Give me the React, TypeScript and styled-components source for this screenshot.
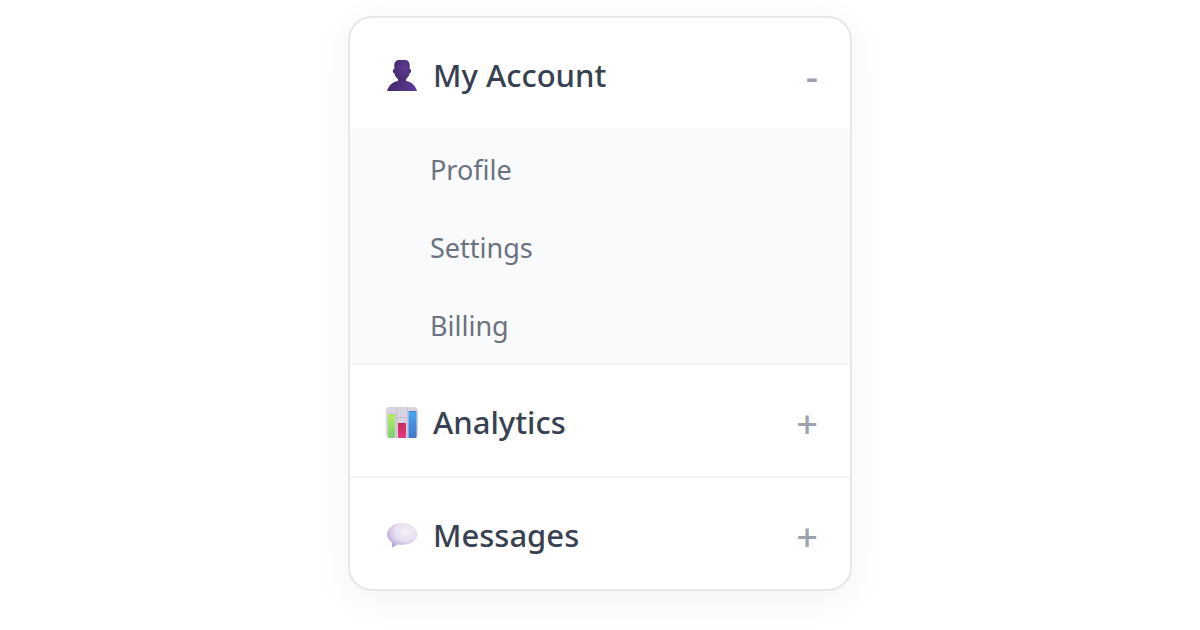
import React, { useState } from "react";
import styled, { createGlobalStyle } from "styled-components";

const GlobalStyle = createGlobalStyle`
  *, *::before, *::after { box-sizing: border-box; }
  body {
    margin: 0;
    background: #ffffff;
    font-family: "Segoe UI", "Noto Sans", "Open Sans", sans-serif;
  }
`;

const Page = styled.main`
  display: flex;
  justify-content: center;
  align-items: flex-start;
  min-height: 100vh;
  padding: 16px;
`;

const Menu = styled.nav`
  width: 100%;
  max-width: 504px;
  overflow: hidden;
  background: #ffffff;
  border: 2px solid #e5e7eb;
  border-radius: 24px;
  box-shadow: 0 8px 40px rgba(0, 0, 0, 0.05);
`;

const Section = styled.section`
  & + & {
    border-top: 2px solid #f3f4f6;
  }
`;

const Header = styled.button`
  display: flex;
  align-items: center;
  gap: 15px;
  width: 100%;
  height: 111px;
  padding: 4px 32px 0 36px;
  border: 0;
  background: transparent;
  color: #374151;
  font: inherit;
  font-size: 31px;
  font-weight: 500;
  line-height: 44px;
  text-align: left;
  cursor: pointer;
`;

const Icon = styled.svg`
  flex: none;
  width: 32px;
  height: 32px;
`;

const Title = styled.span`
  flex: 1;
  padding-bottom: 2px;
`;

const Toggle = styled.span`
  color: #9ca3af;
  font-size: 38px;
`;

const Links = styled.ul`
  margin: 0;
  padding: 0;
  list-style: none;
  background: #f9fafb;
`;

const SubLink = styled.a`
  display: block;
  padding: 21px 32px 17px 80px;
  color: #6b7280;
  font-size: 27px;
  line-height: 40px;
  text-decoration: none;
`;

const PersonIcon = () => (
  <Icon viewBox="0 0 32 32" aria-hidden="true">
    <defs>
      <radialGradient id="person-head" cx="0.65" cy="0.4" r="0.7">
        <stop offset="0" stopColor="#5f3b94" />
        <stop offset="1" stopColor="#432a6c" />
      </radialGradient>
      <linearGradient id="person-body" x1="0" y1="0" x2="1" y2="0">
        <stop offset="0" stopColor="#41286a" />
        <stop offset="0.7" stopColor="#573589" />
        <stop offset="1" stopColor="#623c99" />
      </linearGradient>
    </defs>
    <path d="M1 31C3 24.500 8 20.500 16 20.500S29 24.500 31 31Z" fill="url(#person-body)" />
    <path d="M12 17h8v4.500c-2 1.500-6 1.500-8 0Z" fill="#4b2e78" />
    <path d="M8.300 5C8.300 2 10.500 0 13 0h6c2.500 0 4.700 2 4.700 5v4c1.800-.1 2 4 0 4.100C23 17.500 20 20 16 20s-7-2.500-7.700-6.900c-2-.1-1.800-4.200 0-4.100Z" fill="url(#person-head)" />
  </Icon>
);

const ChartIcon = () => (
  <Icon viewBox="0 0 32 32" aria-hidden="true">
    <defs>
      <linearGradient id="bar-green" x1="0" y1="0" x2="0" y2="1">
        <stop offset="0" stopColor="#b5f060" />
        <stop offset="1" stopColor="#7ccf70" />
      </linearGradient>
      <linearGradient id="bar-pink" x1="0" y1="0" x2="0" y2="1">
        <stop offset="0" stopColor="#c92a62" />
        <stop offset="1" stopColor="#e23a82" />
      </linearGradient>
      <linearGradient id="bar-blue" x1="0" y1="0" x2="0" y2="1">
        <stop offset="0" stopColor="#45a5f2" />
        <stop offset="1" stopColor="#4276cc" />
      </linearGradient>
    </defs>
    <rect width="32" height="31" rx="4" fill="#d8d3e0" />
    <path d="M10.500 0v31M21.500 0v31M0 10.500h32M0 21.500h32" stroke="#c6c0d0" strokeWidth="1" />
    <rect x="2" y="7" width="7" height="24" rx="1" fill="url(#bar-green)" />
    <rect x="12" y="16" width="8" height="15" rx="1" fill="url(#bar-pink)" />
    <rect x="22.500" y="4" width="8" height="27" rx="1" fill="url(#bar-blue)" />
    <path d="M2.500 7.500h6" stroke="#9fdc58" />
    <path d="M12.500 16.500h7" stroke="#b42759" />
    <path d="M23 4.500h7" stroke="#3583ca" />
  </Icon>
);

const BubbleIcon = () => (
  <Icon viewBox="0 0 32 32" aria-hidden="true">
    <defs>
      <radialGradient id="bubble" cx="0.62" cy="0.35" r="0.7">
        <stop offset="0" stopColor="#f4f0f8" />
        <stop offset="0.55" stopColor="#e6dff0" />
        <stop offset="1" stopColor="#b8a4d8" />
      </radialGradient>
    </defs>
    <path d="M16 3C11 3 7 4.500 4 7.800 2 10 1 12 1 14c0 3.500 2 6.500 5 8.300v4.300c0 .9.800 1 1.500.4l4-2.600c1.500.3 3 .3 4.500.3 5.500 0 10-1.700 13-5 1.300-1.600 2.500-3.800 2.500-5.700 0-2-1.200-4.200-3-6C25.500 4.500 21 3 16 3Z" fill="url(#bubble)" />
  </Icon>
);

const sections = [
  { id: "account", title: "My Account", Glyph: PersonIcon, links: ["Profile", "Settings", "Billing"] },
  { id: "analytics", title: "Analytics", Glyph: ChartIcon, links: ["Overview", "Reports"] },
  { id: "messages", title: "Messages", Glyph: BubbleIcon, links: ["Inbox", "Sent"] },
];

export default function App() {
  const [open, setOpen] = useState<string | null>("account");

  return (
    <>
      <GlobalStyle />
      <Page>
        <Menu aria-label="Main">
          {sections.map(({ id, title, Glyph, links }) => (
            <Section key={id}>
              <Header
                type="button"
                aria-expanded={open === id}
                onClick={() => setOpen(open === id ? null : id)}
              >
                <Glyph />
                <Title>{title}</Title>
                <Toggle>{open === id ? "-" : "+"}</Toggle>
              </Header>
              {open === id && (
                <Links>
                  {links.map((link) => (
                    <li key={link}>
                      <SubLink href={`#${link.toLowerCase()}`}>{link}</SubLink>
                    </li>
                  ))}
                </Links>
              )}
            </Section>
          ))}
        </Menu>
      </Page>
    </>
  );
}
